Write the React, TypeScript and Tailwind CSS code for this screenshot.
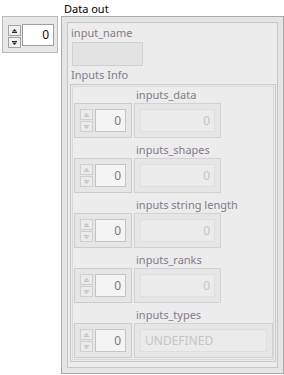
const font = "font-['Noto_Sans',sans-serif] text-[11px] leading-[15px]";

function Arrow({ dir, off }: { dir: 'up' | 'down'; off?: boolean }) {
   const c = off ? '#c4c4c4' : '#2a2a2a';
   return (
      <svg width="7" height="6" viewBox="0 0 7 6">
         {dir === 'up' ? (
            <>
               <polygon points="1,3.5 3.5,1 6,3.5" fill={c} />
               <rect x="1" y="4" width="5" height="1" fill={c} />
            </>
         ) : (
            <>
               <rect x="1" y="1" width="5" height="1" fill={c} />
               <polygon points="1,2.5 6,2.5 3.5,5" fill={c} />
            </>
         )}
      </svg>
   );
}

function Spin({ off }: { off?: boolean }) {
   const btn = off
      ? 'w-[13px] h-[11px] border border-[#d0d0d0] bg-[#ebebeb] flex items-center justify-center'
      : 'w-[13px] h-[11px] border border-[#a3a3a3] bg-[#f2f2f2] flex items-center justify-center';
   return (
      <div className="flex flex-col gap-[1px]">
         <div className={btn}>
            <Arrow dir="up" off={off} />
         </div>
         <div className={btn}>
            <Arrow dir="down" off={off} />
         </div>
      </div>
   );
}

function IndexBox() {
   return (
      <div className="w-[58px] h-[35px] border border-[#cdcdcd] bg-[#e6e6e6] flex items-center pl-[5px] gap-[2px]">
         <Spin off />
         <div className="w-[31px] h-[23px] border border-[#c4c4c4] bg-[#f4f4f4] text-right pr-[4px] leading-[21px] text-[12px] text-[#7a7a7a]">
            0
         </div>
      </div>
   );
}

function Row({ label, wide, value }: { label: string; wide?: boolean; value: string }) {
   return (
      <div className="flex flex-col">
         <div className="h-[15px] pl-[62px] mb-[1px] text-[#86798b] whitespace-nowrap">{label}</div>
         <div className="flex gap-[2px]">
            <IndexBox />
            <div
               className={`${wide ? 'w-[139px]' : 'w-[87px]'} h-[35px] border border-[#d2d2d2] bg-[#e6e6e6] flex items-center px-[5px]`}
            >
               <div
                  className={`w-full h-[23px] border border-[#dedede] bg-[#ebebeb] leading-[21px] text-[12px] text-[#c6c6c6] ${
                     wide ? 'text-left pl-[4px]' : 'text-right pr-[4px]'
                  }`}
               >
                  {value}
               </div>
            </div>
         </div>
      </div>
   );
}

export default function App() {
   return (
      <div className={`w-[284px] h-[375px] bg-white flex overflow-hidden ${font}`}>
         <div className="pt-[16px] pl-[2px]">
            <div className="w-[56px] h-[37px] border border-[#b9b9b9] bg-[#e8e8e8] flex items-start pl-[5px] pt-[7px] gap-[1px]">
               <div className="pt-[1px]">
                  <Spin />
               </div>
               <div className="w-[32px] h-[22px] border border-[#a0a0a0] bg-white text-right pr-[4px] leading-[20px] text-[12px] text-[#0a0a14]">
                  0
               </div>
            </div>
         </div>

         <div className="ml-[3px] flex flex-col">
            <div className="h-[15px] mt-[1px] pl-[3px] text-black">Data out</div>
            <div className="w-[223px] h-[358px] border border-[#ababab] bg-[#e4e5e7] p-[5px]">
               <div className="h-full border border-[#c6c6c6] bg-[#ececec] flex flex-col pt-[2px] pl-[2px] pr-[1px]">
                  <div className="h-[15px] pl-[1px] text-[#86798b]">input_name</div>
                  <div className="mt-[2px] ml-[2px] w-[71px] h-[24px] border border-[#d0d0d0] bg-[#e3e3e3]" />
                  <div className="h-[15px] mt-[1px] pl-[1px] text-[#86798b]">Inputs Info</div>
                  <div className="mt-[2px] w-[206px] h-[278px] border border-[#c9c9c9] shadow-[inset_0_0_0_1px_#ececec,inset_0_0_0_2px_#d9d9d9] pt-[2px] pl-[3px] flex flex-col gap-[4px]">
                     <Row label="inputs_data" value="0" />
                     <Row label="inputs_shapes" value="0" />
                     <Row label="inputs string length" value="0" />
                     <Row label="inputs_ranks" value="0" />
                     <Row label="inputs_types" value="UNDEFINED" wide />
                  </div>
               </div>
            </div>
         </div>
      </div>
   );
}
